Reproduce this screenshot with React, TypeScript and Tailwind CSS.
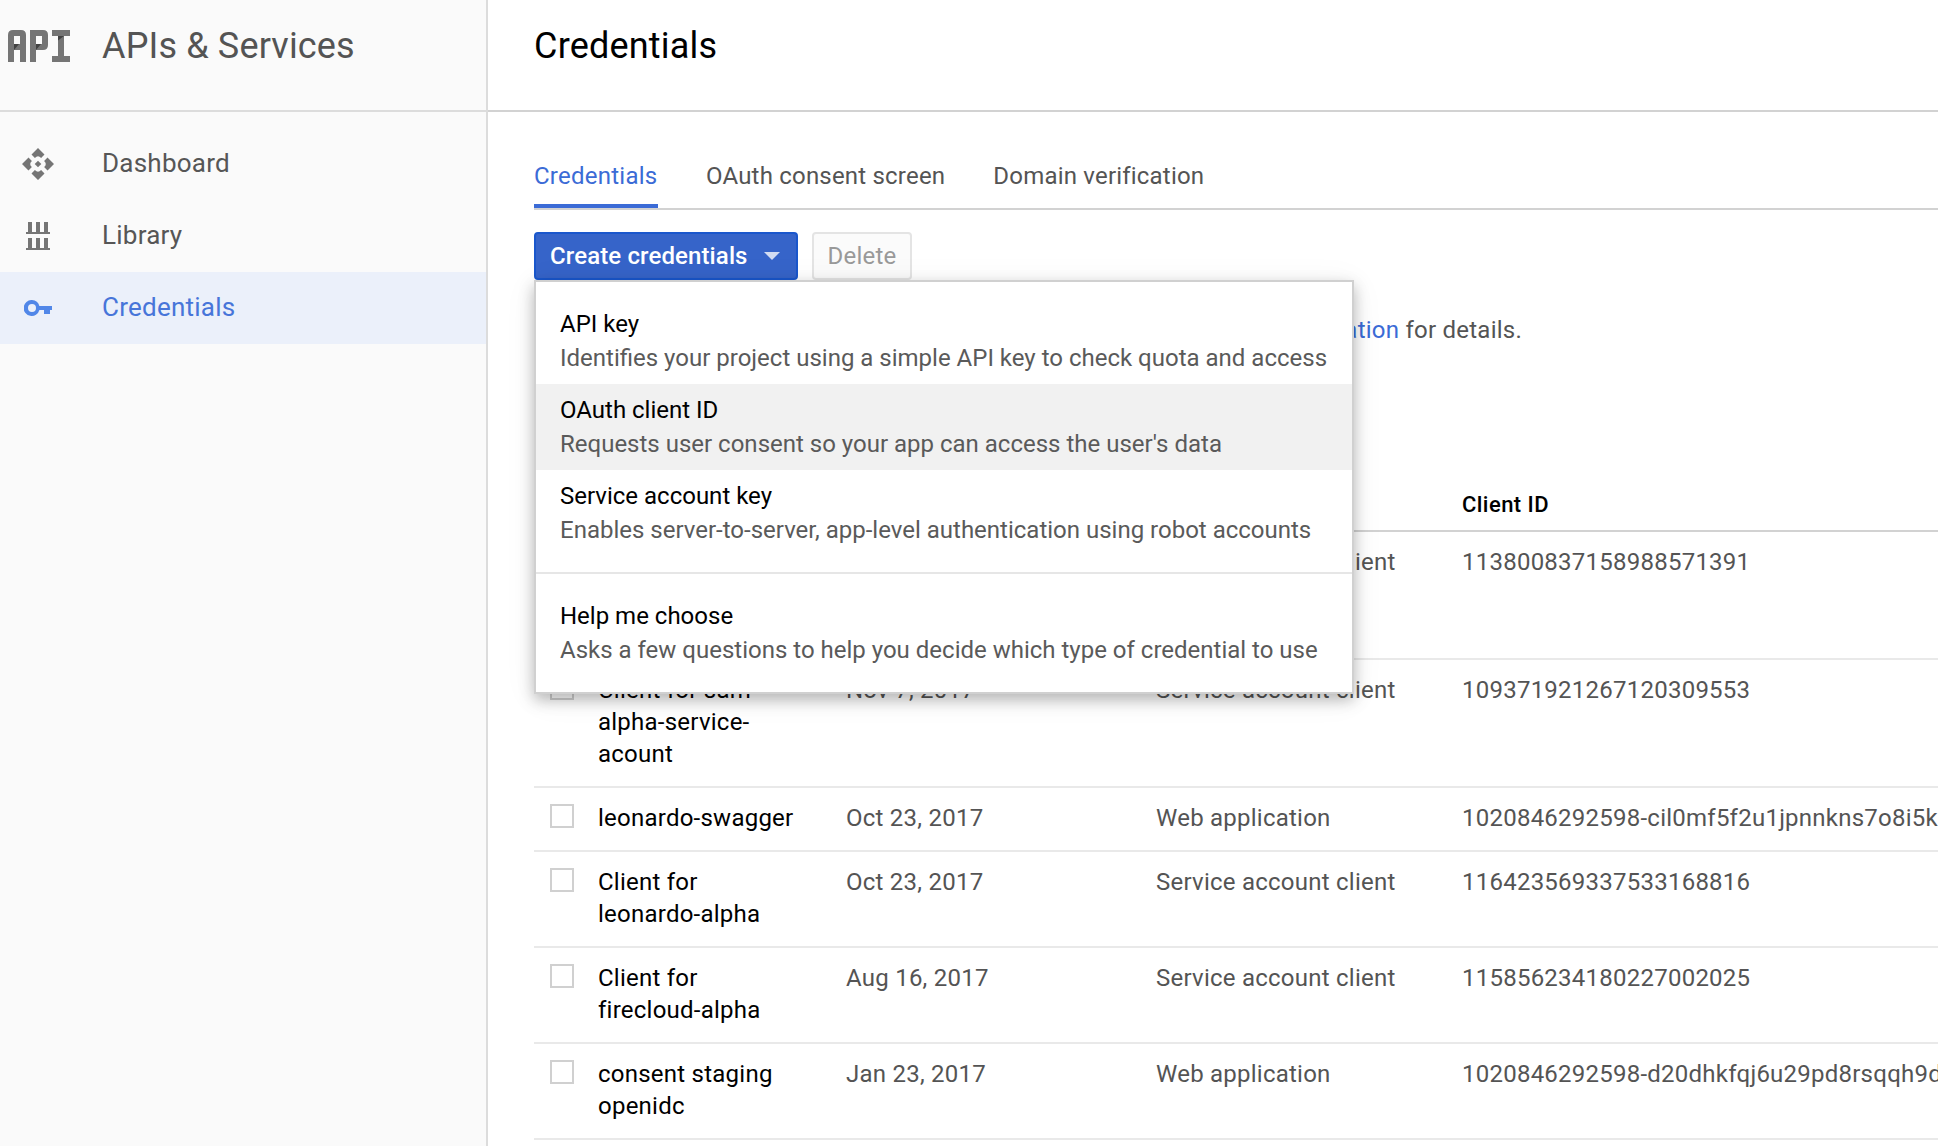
import React from "react";

type Credential = {
  name: string[];
  created: string;
  type: string;
  clientId: string;
};

const credentials: Credential[] = [
  { name: ["", "", ""], created: "", type: "Service account client", clientId: "113800837158988571391" },
  { name: ["Client for sam-", "alpha-service-", "acount"], created: "Nov 7, 2017", type: "Service account client", clientId: "109371921267120309553" },
  { name: ["leonardo-swagger"], created: "Oct 23, 2017", type: "Web application", clientId: "1020846292598-cil0mf5f2u1jpnnkns7o8i5k" },
  { name: ["Client for", "leonardo-alpha"], created: "Oct 23, 2017", type: "Service account client", clientId: "116423569337533168816" },
  { name: ["Client for", "firecloud-alpha"], created: "Aug 16, 2017", type: "Service account client", clientId: "115856234180227002025" },
  { name: ["consent staging", "openidc"], created: "Jan 23, 2017", type: "Web application", clientId: "1020846292598-d20dhkfqj6u29pd8rsqqh9d" },
];

const menuItems = [
  { title: "API key", text: "Identifies your project using a simple API key to check quota and access" },
  { title: "OAuth client ID", text: "Requests user consent so your app can access the user's data", active: true },
  { title: "Service account key", text: "Enables server-to-server, app-level authentication using robot accounts" },
];

function ApiLogo() {
  return (
    <svg width="62" height="32" viewBox="0 0 62 32" fill="#757575">
      <path fillRule="evenodd" d="M0 32V5Q0 0 5 0H13Q18 0 18 5V32H12V20H6V32ZM6 6V14H12V6Z" />
      <path fillRule="evenodd" d="M22 32V0H35Q40 0 40 5V15Q40 20 35 20H28V32ZM28 6V14H34V6Z" />
      <path d="M44 0H62V6H56V26H62V32H44V26H50V6H44Z" />
      <path fill="#424242" d="M6 14H11L6 20ZM28 14H33L28 20ZM50 6H56L50 10.500Z" />
    </svg>
  );
}

function DashboardIcon() {
  return (
    <svg width="32" height="32" viewBox="0 0 32 32" fill="#757575">
      <path d="M16 0L22.500 6.500L19.100 9.900Q16 6.500 12.900 9.900L9.500 6.500Z" />
      <path d="M16 32L22.500 25.500L19.100 22.100Q16 25.500 12.900 22.100L9.500 25.500Z" />
      <path d="M0 16L6.500 9.500L9.900 12.900Q6.500 16 9.900 19.100L6.500 22.500Z" />
      <path d="M32 16L25.500 9.500L22.100 12.900Q25.500 16 22.100 19.100L25.500 22.500Z" />
      <path d="M16 12.700L19.300 16L16 19.300L12.700 16Z" />
    </svg>
  );
}

function LibraryIcon() {
  return (
    <svg width="24" height="28" viewBox="0 0 24 28" fill="#757575">
      <path d="M2 0H6V10H10V0H14V10H18V0H22V10H24V12H0V10H2Z" />
      <path d="M2 16H6V26H10V16H14V26H18V16H22V26H24V28H0V26H2Z" />
    </svg>
  );
}

function KeyIcon() {
  return (
    <svg width="28" height="16" viewBox="0 0 28 16" fill="#5187e8">
      <path fillRule="evenodd" d="M8 0A8 8 0 0 1 15.400 6H28V10H26V14H20V10H15.400A8 8 0 1 1 8 0ZM8 4A4 4 0 1 0 8 12A4 4 0 1 0 8 4Z" />
    </svg>
  );
}

function NavItem({ icon, label, active }: { icon: React.ReactNode; label: string; active?: boolean }) {
  return (
    <a className={active ? "flex h-[72px] items-center bg-[#ebf0fa] text-[#4775d9]" : "flex h-[72px] items-center text-[#565656]"}>
      <span className="flex w-[76px] shrink-0 justify-center">{icon}</span>
      <span className="mb-0.5 ml-[26px] text-[26px] leading-8">{label}</span>
    </a>
  );
}

function MenuItem({ title, text, active }: { title: string; text: string; active?: boolean }) {
  return (
    <div className={active ? "h-[86px] bg-[#f1f1f1] px-6 pt-[9px]" : "h-[86px] px-6 pt-[9px]"}>
      <div className="leading-[34px] text-black">{title}</div>
      <div className="leading-[34px] whitespace-nowrap text-[#5a5a5a]">{text}</div>
    </div>
  );
}

const columns = "grid grid-cols-[64px_248px_310px_306px_1fr]";

export default function App() {
  return (
    <div className="flex h-[1146px] w-[1938px] overflow-hidden bg-white font-['Roboto',sans-serif] text-[24px] tracking-[0.24px] text-[#545454]">
      <aside className="w-[488px] shrink-0 border-r-2 border-[#dcdcdc] bg-[#fafafa]">
        <header className="flex h-28 items-start border-b-2 border-[#dcdcdc] pl-2">
          <span className="mt-[30px] w-[94px]"><ApiLogo /></span>
          <h1 className="mt-6 text-[36px] leading-[44px] tracking-[0.15px]">APIs &amp; Services</h1>
        </header>
        <nav className="pt-4">
          <NavItem icon={<DashboardIcon />} label="Dashboard" />
          <NavItem icon={<LibraryIcon />} label="Library" />
          <NavItem icon={<KeyIcon />} label="Credentials" active />
        </nav>
      </aside>

      <main className="min-w-0 flex-1">
        <header className="h-28 border-b-2 border-[#d2d2d2] pt-6 pl-[46px]">
          <h2 className="text-[36px] leading-[44px] tracking-[0.2px] text-black">Credentials</h2>
        </header>
        <section className="pl-[46px]">
          <div className="flex h-[98px] gap-12 border-b-2 border-[#d2d2d2] pt-[47px]">
            <a className="w-[124px] border-b-4 border-[#3b6bd6] leading-[34px] text-[#3b6bd6]">Credentials</a>
            <a className="leading-[34px] tracking-[0.2px]">OAuth consent screen</a>
            <a className="leading-[34px] tracking-[0.2px]">Domain verification</a>
          </div>

          <div className="relative mt-[22px] flex gap-[14px]">
            <button className="flex h-12 w-[264px] items-center rounded-[4px] border-2 border-[#1a57cc] bg-[#3664c9] pl-[14px] font-medium tracking-[0.12px] text-white">
              Create credentials
              <span className="ml-[16px] border-x-8 border-t-8 border-x-transparent border-t-[#d2dcf2]" />
            </button>
            <button className="h-12 w-[100px] rounded-[4px] border-2 border-[#e4e4e4] bg-[#fbfbfb] text-[#999]">Delete</button>

            <div className="absolute top-12 left-0 z-10 w-[820px] border-2 border-[#d0d0d0] bg-white tracking-normal shadow-[0_4px_32px_rgba(0,0,0,0.06),0_6px_14px_rgba(0,0,0,0.26)]">
              <div className="border-b-2 border-[#e6e6e6] py-4">
                {menuItems.map((item) => <MenuItem key={item.title} {...item} />)}
              </div>
              <div className="py-4">
                <MenuItem title="Help me choose" text="Asks a few questions to help you decide which type of credential to use" />
              </div>
            </div>
          </div>

          <p className="mt-[34px] w-[988px] text-right leading-8 whitespace-nowrap">
            <a className="text-[#3b6bd6]">documentation</a> for details.
          </p>

          <div className={`${columns} mt-[142px] h-11 border-b-2 border-[#d2d2d2] text-[22px] leading-[34px] font-medium tracking-[0.45px] text-black`}>
            <span className="col-start-5">Client ID</span>
          </div>
          {credentials.map((row) => (
            <div key={row.clientId} className={`${columns} border-b-2 border-[#e9e9e9] pt-[14px] pb-4 leading-8`}>
              <span className="mt-0.5 ml-4 size-6 border-2 border-[#d0d0d0] bg-white" />
              <span className="text-black">
                {row.name.map((line, i) => <span key={i} className="block h-8 whitespace-nowrap">{line}</span>)}
              </span>
              <span>{row.created}</span>
              <span>{row.type}</span>
              <span className="whitespace-nowrap">{row.clientId}</span>
            </div>
          ))}
        </section>
      </main>
    </div>
  );
}
